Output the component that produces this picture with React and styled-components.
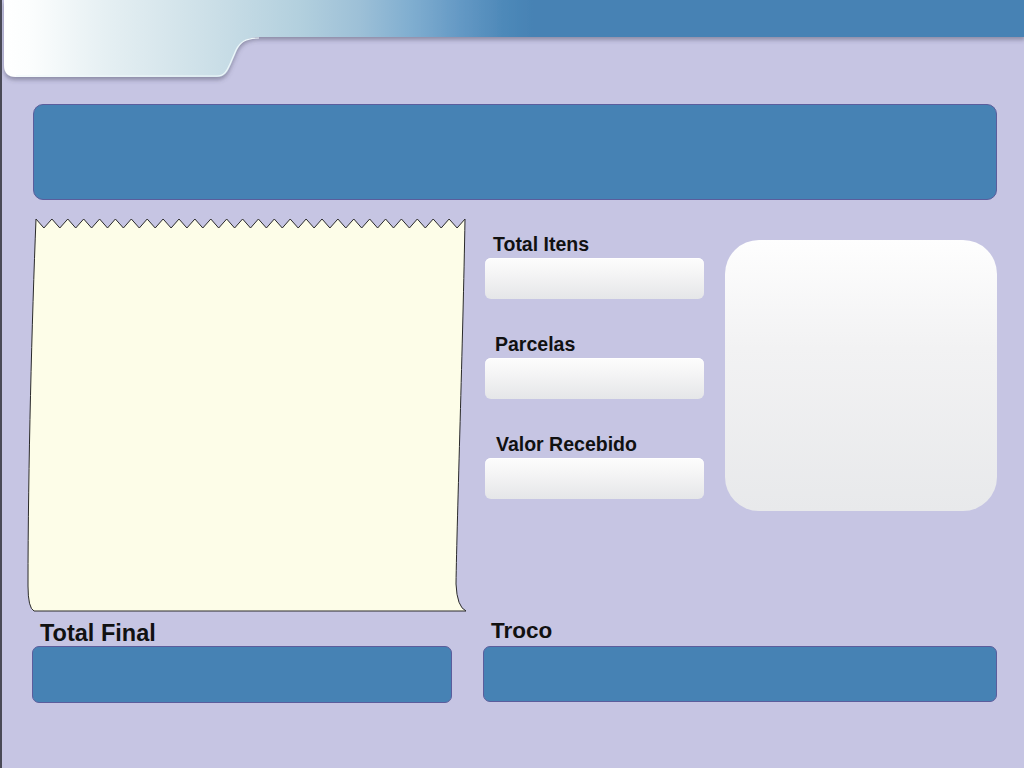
import React from "react";
import styled, { createGlobalStyle } from "styled-components";

const GlobalStyle = createGlobalStyle`
  html, body {
    margin: 0;
    padding: 0;
    background: #c6c5e3;
  }
  body {
    font-family: "Liberation Sans", Arial, sans-serif;
  }
`;

const Screen = styled.div`
  box-sizing: border-box;
  width: 1024px;
  min-height: 768px;
  background: #c6c5e3;
  border-left: 2px solid #4a4a56;
  overflow: hidden;
`;

const Header = styled.div`
  height: 80px;
  & svg {
    display: block;
    overflow: visible;
  }
`;

const TopBar = styled.div`
  box-sizing: border-box;
  height: 96px;
  margin: 24px 27px 0 31px;
  background: #4682b4;
  border: 1px solid #5b5d9c;
  border-radius: 10px;
`;

const Body = styled.div`
  display: grid;
  grid-template-columns: 440px 514px;
  column-gap: 16px;
  row-gap: 8px;
  padding-left: 25px;
  margin-top: 18px;
`;

const Receipt = styled.div`
  width: 440px;
  height: 394px;
  & svg {
    display: block;
  }
`;

const FormArea = styled.div`
  display: flex;
  align-items: flex-start;
  padding-left: 2px;
`;

const Fields = styled.div`
  display: flex;
  flex-direction: column;
  gap: 34px;
  width: 219px;
  padding-top: 15px;
`;

const Field = styled.div`
  display: flex;
  flex-direction: column;
  gap: 3px;
`;

const Label = styled.span`
  display: block;
  margin-left: ${(p) => p.$indent}px;
  font-size: ${(p) => p.$size || 19.5}px;
  line-height: ${(p) => p.$lh || 22}px;
  height: ${(p) => p.$h || 22}px;
  font-weight: bold;
  color: #111;
  white-space: nowrap;
`;

const InputBox = styled.div`
  height: 41px;
  border-radius: 6px;
  background: linear-gradient(#fdfdfd, #f3f3f4 45%, #e5e6e8);
  box-shadow: inset 0 1px 0 #ffffff;
`;

const Preview = styled.div`
  width: 272px;
  height: 271px;
  margin: 22px 0 0 21px;
  border-radius: 34px;
  background: linear-gradient(#fefefe, #f2f2f3 40%, #e8e9eb);
`;

const Summary = styled.div`
  display: flex;
  flex-direction: column;
`;

const ValueBar = styled.div`
  box-sizing: border-box;
  width: ${(p) => p.$width}px;
  height: ${(p) => p.$height}px;
  margin-left: ${(p) => p.$offset || 0}px;
  background: #4682b4;
  border: 1px solid #5b5d9c;
  border-radius: 7px;
`;

const HeaderShape = () => (
  <svg width="1022" height="80" viewBox="1 0 1022 80">
    <defs>
      <linearGradient id="band" x1="0" y1="0" x2="1024" y2="0" gradientUnits="userSpaceOnUse">
        <stop offset="0" stopColor="#ffffff" />
        <stop offset="0.03" stopColor="#fbfdfd" />
        <stop offset="0.1" stopColor="#e6f0f3" />
        <stop offset="0.2" stopColor="#cde0e8" />
        <stop offset="0.29" stopColor="#b3d0de" />
        <stop offset="0.35" stopColor="#9dc0d7" />
        <stop offset="0.4" stopColor="#80aed0" />
        <stop offset="0.45" stopColor="#6398c4" />
        <stop offset="0.49" stopColor="#4e89b9" />
        <stop offset="0.52" stopColor="#4682b4" />
        <stop offset="1" stopColor="#4682b4" />
      </linearGradient>
      <filter id="drop" x="-5%" y="-20%" width="110%" height="150%">
        <feDropShadow dx="0" dy="3" stdDeviation="2.2" floodColor="#4a4a60" floodOpacity="0.45" />
      </filter>
    </defs>
    <path
      d="M3 0 H1024 V37 H258 C246 37 240 42 236 50 L230 64 C227 71 224 77 216 77 H15 Q3 77 3 65 Z"
      fill="url(#band)"
      filter="url(#drop)"
    />
    <path
      d="M15 76 H216 C223 76 226 71 229 64 L235 50 C239 42 245 38 258 38"
      fill="none"
      stroke="#eef7fa"
      strokeWidth="1.2"
    />
  </svg>
);

const teeth = (() => {
  const n = 27;
  const start = 9;
  const w = 429 / n;
  let d = `M${start} 1`;
  for (let i = 0; i < n; i++) {
    d += ` L${(start + (i + 0.5) * w).toFixed(1)} 10 L${(start + (i + 1) * w).toFixed(1)} 1`;
  }
  return d;
})();

const ReceiptPaper = () => (
  <svg width="440" height="394" viewBox="0 0 440 394">
    <path
      d={`${teeth} C436 120 430 300 429 366 Q430 389 439 393 L7 393 Q1 390 1 368 C1 250 5 100 9 1 Z`}
      fill="#fdfde8"
      stroke="#2a2a2a"
      strokeWidth="1"
    />
  </svg>
);

const fields = [
  { label: "Total Itens", indent: 8 },
  { label: "Parcelas", indent: 10 },
  { label: "Valor Recebido", indent: 11 },
];

export default function App() {
  return (
    <>
      <GlobalStyle />
      <Screen>
        <Header>
          <HeaderShape />
        </Header>
        <TopBar />
        <Body>
          <Receipt>
            <ReceiptPaper />
          </Receipt>
          <FormArea>
            <Fields>
              {fields.map((f) => (
                <Field key={f.label}>
                  <Label $indent={f.indent}>{f.label}</Label>
                  <InputBox />
                </Field>
              ))}
            </Fields>
            <Preview />
          </FormArea>
          <Summary>
            <Label $indent={13} $size={23.5} $lh={26} $h={26}>
              Total Final
            </Label>
            <ValueBar $width={420} $height={57} $offset={5} />
          </Summary>
          <Summary>
            <Label $indent={8} $size={22.5} $lh={22} $h={26}>
              Troco
            </Label>
            <ValueBar $width={514} $height={56} />
          </Summary>
        </Body>
      </Screen>
    </>
  );
}
